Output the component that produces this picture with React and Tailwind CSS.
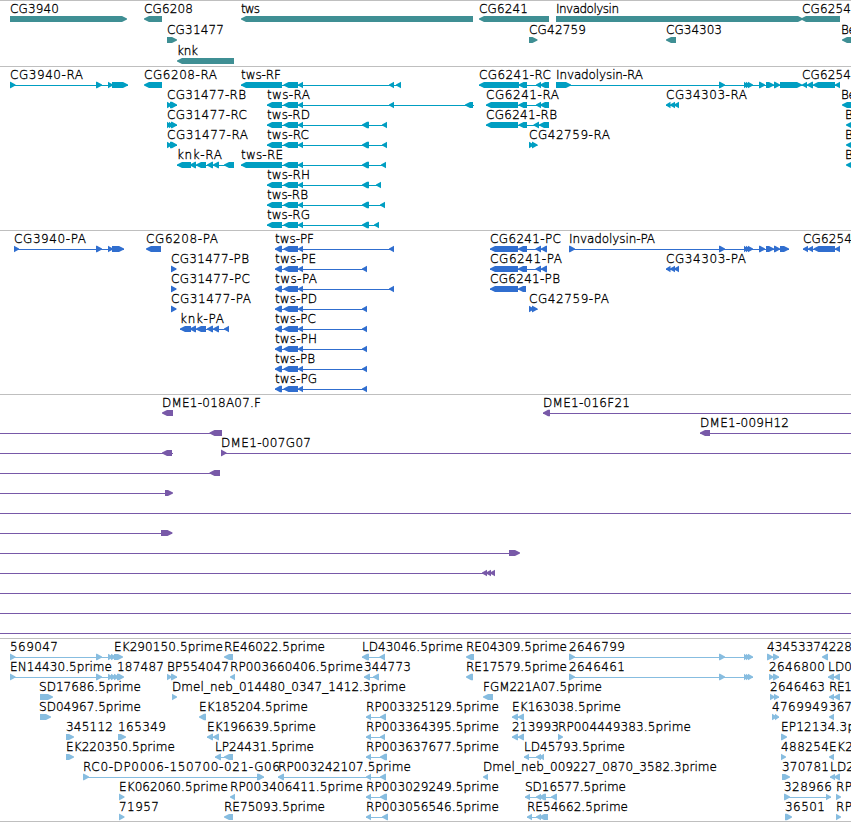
const WIDTH = 851
const HEAD = 5

// fwd / rev: label, where it starts and ends, then the blocks as flat start,end pairs
const fwd = (label, from, to, ...blocks) => ({ label, from, to, dir: 1, blocks })
const rev = (label, from, to, ...blocks) => ({ label, from, to, dir: -1, blocks })
// same feature, with a connector that runs further than its blocks
const span = (start, end, feature) => ({ ...feature, start, end })
const through = { dir: 1, blocks: [], start: 0, end: WIDTH }

const invadolysin = [719, 725, 744, 748, 746, 750, 748, 753, 759, 765, 766, 774, 774, 780]
const est = [569, 575, 719, 725, 744, 748, 746, 750, 748, 753]
const twsMid = [283.5, 298, 298, 303]
const twsR = [267, 282, ...twsMid]
const twsP = [275, 282, ...twsMid]

const genes = [
  [
    fwd("CG3940", 10, 59, 10, 127),
    rev("CG6208", 144, 193, 144, 162),
    rev("tws", 241, 260, 241, 473),
    rev("CG6241", 479, 528, 479, 549),
    fwd("Invadolysin", 556, 619, 556, 803),
    rev("CG6254", 802, 851, 801, 840),
  ],
  [
    fwd("CG31477", 167, 224, 167, 177),
    fwd("CG42759", 529, 586, 529, 537.5),
    rev("CG34303", 666, 722, 666, 676),
    rev("Be", 841, 856, 842, 860),
  ],
  [rev("knk", 177, 198, 177, 234)],
]

const transcripts = [
  [
    fwd("CG3940-RA", 10, 83, 10, 15.5, 96, 102, 108, 113, 112, 128),
    rev("CG6208-RA", 144, 217, 144, 162),
    rev("tws-RF", 241, 281, 241, 282, ...twsMid, 389, 394, 396, 401),
    rev("CG6241-RC", 479, 551, 479, 519, 518.5, 527, 536, 541, 540, 549),
    fwd("Invadolysin-RA", 556, 643, 556, 571, ...invadolysin, 780, 802),
    rev("CG6254", 802, 851, 802, 807, 807, 813, 813, 835, 835, 840),
  ],
  [
    fwd("CG31477-RB", 167, 246, 167, 172, 170, 177),
    span(267, 474, rev("tws-RA", 267, 310, ...twsR, 389, 394, 465, 473)),
    rev("CG6241-RA", 486, 559, 486, 518, 518.5, 527, 536, 541, 540, 549),
    rev("CG34303-RA", 666, 747, 666, 670.5, 670, 675, 674, 679),
    rev("Be", 841, 856, 842, 860),
  ],
  [
    fwd("CG31477-RC", 167, 247, 167, 171, 169, 173, 171, 177),
    rev("tws-RD", 267, 310, ...twsR, 362, 369, 382, 387),
    rev("CG6241-RB", 486, 557, 486, 518, 518.5, 527, 533.5, 539, 539, 549),
    rev("B", 845, 853, 846, 860),
  ],
  [
    fwd("CG31477-RA", 167, 248, 167, 172, 170, 177),
    rev("tws-RC", 267, 309, ...twsR, 362, 369, 382, 387),
    fwd("CG42759-RA", 529, 610, 529, 534, 532, 537.5),
    rev("B", 845, 853, 846, 860),
  ],
  [
    rev("knk-RA", 177, 222, 177, 191, 190, 196, 196, 206, 207, 213, 213, 219, 224, 234),
    rev("tws-RE", 241, 283, 241, 282, ...twsMid, 362, 369, 381, 386),
    rev("B", 845, 853, 846, 860),
  ],
  [rev("tws-RH", 267, 310, ...twsR, 362, 369, 376, 381)],
  [rev("tws-RB", 267, 308, ...twsR, 362, 369, 380, 385)],
  [rev("tws-RG", 267, 310, ...twsR, 362, 369, 374, 379)],
]

const proteins = [
  [
    fwd("CG3940-PA", 14, 86, 14, 19, 96, 102, 108, 113, 112, 124),
    rev("CG6208-PA", 146, 218, 146, 161),
    rev("tws-PF", 275, 314, ...twsP, 389, 394),
    rev("CG6241-PC", 490, 561, 490, 518, 518, 527, 535.5, 541, 541, 547),
    fwd("Invadolysin-PA", 569, 655, 569, 575, ...invadolysin, 780, 789),
    rev("CG6254", 803, 852, 803, 808, 808, 813, 813.5, 835, 835, 840),
  ],
  [
    fwd("CG31477-PB", 171, 249, 171, 176.5),
    rev("tws-PE", 275, 316, ...twsP, 362, 367),
    rev("CG6241-PA", 490, 562, 490, 518, 518, 527, 535.5, 541, 541, 547),
    rev("CG34303-PA", 666, 746, 666, 670.5, 670, 675, 674, 679),
  ],
  [
    fwd("CG31477-PC", 171, 250, 171, 176.5),
    rev("tws-PA", 275, 317, ...twsP, 389, 394),
    rev("CG6241-PB", 490, 560, 490, 518, 518, 526),
  ],
  [
    fwd("CG31477-PA", 171, 251, 171, 176.5),
    rev("tws-PD", 275, 317, ...twsP, 362, 367),
    fwd("CG42759-PA", 529, 609, 529, 534, 532, 537.5),
  ],
  [
    rev("knk-PA", 180, 224, 180, 191, 190, 196, 196, 206, 207, 213, 213, 219, 224, 229),
    rev("tws-PC", 275, 316, ...twsP, 362, 367),
  ],
  [rev("tws-PH", 275, 317, ...twsP, 362, 367)],
  [rev("tws-PB", 275, 315, ...twsP, 362, 367)],
  [rev("tws-PG", 275, 317, ...twsP, 362, 367)],
]

const clones = [
  [
    rev("DME1-018A07.F", 162, 261, 162, 173),
    span(543, WIDTH, rev("DME1-016F21", 543, 630, 543, 550)),
  ],
  [
    span(0, 222, rev("", 0, 0, 209.5, 222)),
    span(700, WIDTH, rev("DME1-009H12", 700, 789, 700, 710)),
  ],
  [
    span(0, 173, rev("", 0, 0, 162, 172)),
    span(221, WIDTH, fwd("DME1-007G07", 221, 311, 221, 226.5)),
  ],
  [span(0, 220, rev("", 0, 0, 209.5, 220))],
  [span(0, 172, fwd("", 0, 0, 165, 173))],
  [through],
  [span(0, 172, fwd("", 0, 0, 161, 172.5))],
  [span(0, 519, fwd("", 0, 0, 509, 520))],
  [span(0, 495, rev("", 0, 0, 482, 487, 486, 491, 490, 495))],
  [through],
  [through],
  [through],
]

const ests = [
  [
    fwd("569047", 10, 58, 10, 15.5, 96, 102, 108, 113, 111, 116),
    fwd("EK290150.5prime", 114, 223, 114, 123),
    rev("RE46022.5prime", 224, 325, 224, 233),
    rev("LD43046.5prime", 362, 463, 362, 369, 379.5, 385),
    rev("RE04309.5prime", 466, 567, 466, 474),
    fwd("2646799", 569, 625, ...est),
    fwd("4345337", 767, 821, 767, 773, 773, 779),
    rev("4228", 821, 852, 822, 828),
  ],
  [
    fwd("EN14430.5prime", 10, 112, 10, 15.5, 96, 102, 108, 113, 111, 116, 114, 119),
    fwd("187487", 117, 164, 117, 124),
    fwd("BP554047", 167, 229, 167, 172, 171, 177),
    rev("RP003660406.5prime", 230, 363, 230, 235),
    rev("344773", 364, 411, 364, 370, 373, 379),
    rev("RE17579.5prime", 466, 567, 466, 473),
    fwd("2646461", 569, 625, ...est),
    fwd("2646800", 769, 825, 769, 774, 773, 779),
    rev("LD0", 828, 852, 828, 834, 834, 840),
  ],
  [
    fwd("SD17686.5prime", 39, 141, 40, 53),
    fwd("Dmel_neb_014480_0347_1412.3prime", 172, 406, 172, 177),
    rev("FGM221A07.5prime", 483, 602, 483, 493),
    fwd("2646463", 770, 825, 770, 775, 774, 779),
    rev("RE1", 829, 852, 829, 834, 834, 840),
  ],
  [
    fwd("SD04967.5prime", 39, 141, 40, 51),
    rev("EK185204.5prime", 199, 308, 199, 206),
    rev("RP003325129.5prime", 366, 499, 366, 371, 380, 386),
    rev("EK163038.5prime", 512, 621, 512, 518, 518, 524),
    fwd("4769949", 772, 828, 772, 777, 775, 779),
    rev("367", 829, 852, 829, 834),
  ],
  [
    fwd("345112", 66, 113, 66, 74),
    fwd("165349", 118, 166, 118, 126),
    rev("EK196639.5prime", 207, 316, 207, 213, 213, 219),
    rev("RP003364395.5prime", 366, 499, 366, 371, 380, 385),
    rev("213993", 512, 559, 512, 518, 518, 524),
    fwd("RP004449383.5prime", 558, 691, 558, 563),
    fwd("EP12134.3p", 781, 855, 781, 787),
  ],
  [
    fwd("EK220350.5prime", 66, 175, 66, 74),
    rev("LP24431.5prime", 215, 314, 215, 221, 224, 233),
    rev("RP003637677.5prime", 366, 499, 366, 371, 380, 387),
    rev("LD45793.5prime", 524, 625, 524, 529, 536, 541, 539, 544),
    fwd("488254", 781, 829, 781, 786),
    rev("EK2", 829, 853, 829, 834),
  ],
  [
    fwd("RC0-DP0006-150700-021-G06", 83, 280, 83, 89, 257, 264),
    rev("RP003242107.5prime", 278, 411, 278, 284, 366, 371, 380, 386),
    rev("Dmel_neb_009227_0870_3582.3prime", 483, 717, 483, 488),
    fwd("370781", 782, 829, 782, 790),
    rev("LD2", 830, 854, 830, 835, 834, 840),
  ],
  [
    fwd("EK062060.5prime", 119, 228, 119, 124.5),
    rev("RP003406411.5prime", 230, 363, 230, 235),
    rev("RP003029249.5prime", 366, 499, 366, 371, 380, 387),
    rev("SD16577.5prime", 525, 626, 525, 530, 536, 541, 539, 546, 551, 557),
    fwd("328966", 784, 832, 784, 790, 826, 831),
    fwd("RP", 836, 852, 836, 841),
  ],
  [
    fwd("71957", 119, 159, 119, 124.5),
    rev("RE75093.5prime", 224, 325, 224, 233),
    rev("RP003056546.5prime", 366, 499, 366, 371, 382, 388),
    rev("RE54662.5prime", 527, 628, 527, 532, 536, 541, 539, 548),
    fwd("36501", 785, 825, 785, 792),
    fwd("RP", 836, 852, 836, 841),
  ],
]

function blockPoints(a, b, dir) {
  const head = Math.min(HEAD, b - a)
  const top = b - a < 8 ? 14.7 : 15
  const bottom = b - a < 8 ? 21.3 : 21
  return dir > 0
    ? `${a},${top} ${b - head},${top} ${b},17.5 ${b},18.5 ${b - head},${bottom} ${a},${bottom}`
    : `${b},${top} ${a + head},${top} ${a},17.5 ${a},18.5 ${a + head},${bottom} ${b},${bottom}`
}

function Feature({ feature }) {
  const { label, from, to, dir, blocks } = feature
  const start = feature.start ?? blocks[0]
  const end = feature.end ?? blocks[blocks.length - 1]
  const pairs = []
  for (let i = 0; i < blocks.length; i += 2) pairs.push([blocks[i], blocks[i + 1]])

  return (
    <g>
      {(pairs.length !== 1 || feature.end) && (
        <rect x={start} y="18" width={end - start} height="1" fill="currentColor" />
      )}
      {pairs.map(([a, b]) => (
        <polygon key={a} points={blockPoints(a, b, dir)} fill="currentColor" />
      ))}
      {label && (
        <text x={from} y="12" textLength={to - from} className="fill-black stroke-black stroke-[0.32]">
          {label}
        </text>
      )}
    </g>
  )
}

function Track({ rows, className, rowClass = "h-5" }) {
  return (
    <section className={`flex flex-col border-t border-[#bfbfbf] ${className}`}>
      {rows.map((row, i) => (
        <svg key={i} width={WIDTH} className={`block shrink-0 overflow-visible ${rowClass}`}>
          {row.map((feature, j) => (
            <Feature key={j} feature={feature} />
          ))}
        </svg>
      ))}
    </section>
  )
}

export default function App() {
  return (
    <main className="w-[851px] h-[822px] overflow-hidden bg-white border-b border-[#bfbfbf] text-[12px] font-['DejaVu_Sans',sans-serif] font-extralight">
      <Track rows={genes} className="h-[66px] text-[#3f8f94]" rowClass="h-[21px]" />
      <Track rows={transcripts} className="h-[164px] text-[#009ec2]" />
      <Track rows={proteins} className="h-[164px] text-[#306ecf]" />
      <Track rows={clones} className="h-[244px] text-[#7859a8]" />
      <Track rows={ests} className="h-[183px] text-[#87bde0]" />
    </main>
  )
}
